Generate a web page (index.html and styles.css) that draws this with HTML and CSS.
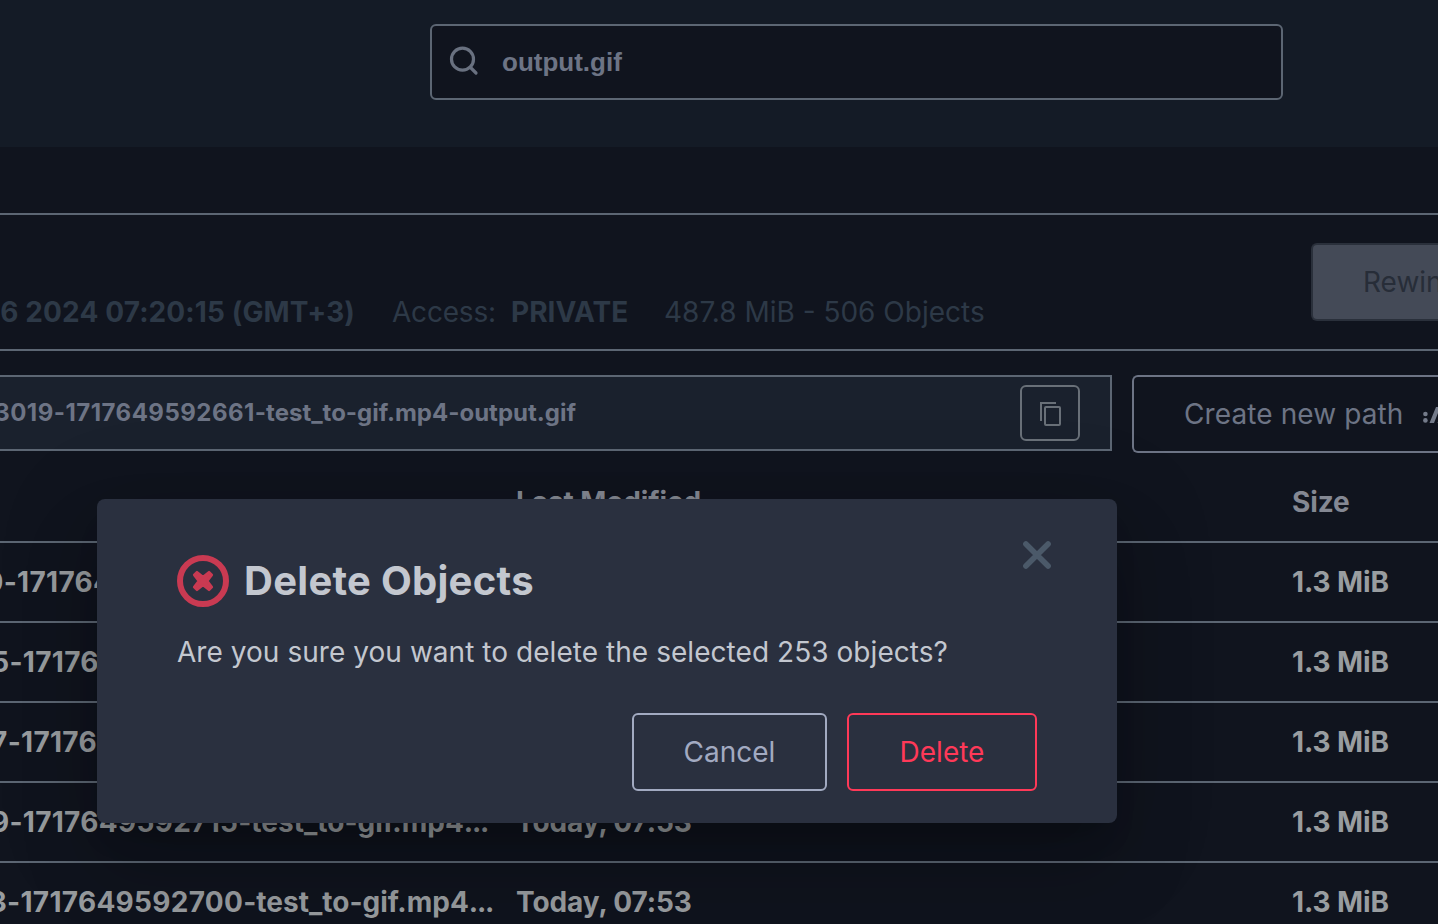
FILE: index.html
```html
<!DOCTYPE html>
<html lang="en">
<head>
<meta charset="utf-8">
<title>Delete Objects</title>
<link rel="stylesheet" href="styles.css">
</head>
<body>
<div class="app">
  <header class="topbar">
    <div class="search">
      <svg class="search-icon" width="30" height="30" viewBox="0 0 30 30" fill="none" stroke="#697180" stroke-width="3.2" stroke-linecap="round"><circle cx="13.5" cy="13.2" r="11"/><path d="M21.5 21.5 27 27"/></svg>
      <span class="search-text">output.gif</span>
    </div>
  </header>
  <section class="bucket">
    <div class="meta">
      <span class="created"><b>6 2024 07:20:15 (GMT+3)</b></span>
      <span class="access">Access:</span><b class="private">PRIVATE</b>
      <span class="usage">487.8 MiB - 506 Objects</span>
    </div>
    <button class="rewind">Rewind</button>
  </section>
  <section class="pathrow">
    <div class="path">
      <div class="path-text"><span><span class="num">3019-1717649592661</span>-test_to-gif.mp4-output.gif</span></div>
      <button class="copy"><svg width="22" height="26" viewBox="0 0 22 26" fill="none" stroke="#697078" stroke-width="2"><path d="M1 20V2h15"/><rect x="5" y="6" width="15" height="18" rx="1"/></svg></button>
    </div>
    <button class="newpath">Create new path <svg width="32" height="20" viewBox="0 0 32 20" fill="#747b8a"><circle cx="2.4" cy="8" r="2.3"/><circle cx="2.4" cy="14.4" r="2.3"/><path d="M6.5 17 13 1h4.4L11 17zM14.5 17 21 1h4.4L19 17z"/></svg></button>
  </section>
  <section class="table">
    <div class="row head"><div class="name"></div><div class="date">Last Modified</div><div class="size">Size</div></div>
    <div class="row"><div class="name n1"><span><span class="num">0-1717649592733</span>-test_to-gif.mp4<span class="dots">...</span></span></div><div class="date">Today, 07:53</div><div class="size">1.3 MiB</div></div>
    <div class="row"><div class="name n2"><span><span class="num">5-1717649592727</span>-test_to-gif.mp4<span class="dots">...</span></span></div><div class="date">Today, 07:53</div><div class="size">1.3 MiB</div></div>
    <div class="row"><div class="name n3"><span><span class="num">7-1717649592721</span>-test_to-gif.mp4<span class="dots">...</span></span></div><div class="date">Today, 07:53</div><div class="size">1.3 MiB</div></div>
    <div class="row"><div class="name n4"><span><span class="num">9-1717649592715</span>-test_to-gif.mp4<span class="dots">...</span></span></div><div class="date">Today, 07:53</div><div class="size">1.3 MiB</div></div>
    <div class="row"><div class="name n5"><span><span class="num">3-1717649592700</span>-test_to-gif.mp4<span class="dots">...</span></span></div><div class="date">Today, 07:53</div><div class="size">1.3 MiB</div></div>
  </section>
</div>
<div class="modal" role="dialog">
  <svg class="close" width="30" height="30" viewBox="0 0 30 30" stroke="#4b5969" stroke-width="5.6" stroke-linecap="round"><path d="M3.9 3.9 26.1 26.1M26.1 3.9 3.9 26.1"/></svg>
  <div class="title">
    <svg width="52" height="52" viewBox="0 0 52 52"><circle cx="26" cy="26" r="23" fill="none" stroke="#c93a52" stroke-width="6"/><path d="M20 17.2 26 22 32 17.2 34.8 20 30.2 26 34.8 32 32 34.8 26 30 20 34.8 17.2 32 21.8 26 17.2 20z" fill="#c93a52" stroke="#c93a52" stroke-width="2.6" stroke-linejoin="round"/></svg>
    <h1>Delete Objects</h1>
  </div>
  <p>Are you sure you want to delete the selected 253 objects?</p>
  <div class="actions"><button class="cancel">Cancel</button><button class="delete">Delete</button></div>
</div>
</body>
</html>
```
FILE: styles.css
```css
* { box-sizing: border-box; }
body { margin: 0; width: 1438px; height: 924px; overflow: hidden; background: #10141e; font-family: Inter, sans-serif; font-size: 28px; line-height: 34px; position: relative; }
button { font: inherit; background: none; margin: 0; white-space: nowrap; text-align: left; }
.app { width: 1438px; height: 924px; overflow: hidden; }
.topbar { height: 147px; background: #141b26; padding: 24px 0 0 430px; }
.search { width: 853px; height: 76px; border: 2px solid #5c6673; border-radius: 6px; background: #10141e; display: flex; align-items: center; padding-left: 17px; color: #6d7485; }
.search-icon { margin-right: 23px; margin-top: -2px; }
.search-text { font-family: "Liberation Sans", Arial, sans-serif; font-size: 26px; font-weight: 700; }
.bucket { height: 138px; margin-top: 66px; border-top: 2px solid #5c6673; border-bottom: 2px solid #5c6673; display: flex; justify-content: space-between; }
.meta { display: flex; padding-top: 80px; color: #2d3947; white-space: nowrap; font-weight: 400; }
.meta b { font-weight: 700; }
.created { width: 355px; display: flex; justify-content: flex-end; overflow: hidden; margin-right: 37px; letter-spacing: .12px; }
.access { width: 119px; letter-spacing: -.2px; }
.private { width: 153px; }
.rewind { width: 127px; height: 78px; margin-top: 28px; border: 2px solid #2a303b; border-right: 0; border-radius: 6px 0 0 6px; background: #444a57; color: #272d38; padding: 0 0 0 50px; overflow: hidden; font-weight: 400; }
.pathrow { display: flex; margin-top: 24px; gap: 20px; height: 78px; }
.path { width: 1112px; height: 76px; border: 2px solid #5c6673; border-left: 0; background: #1a212d; display: flex; align-items: center; }
.path-text { width: 576px; display: flex; justify-content: flex-end; overflow: hidden; white-space: nowrap; font-size: 24px; font-weight: 700; color: #6d7485; }
.path-text .num { letter-spacing: .48px; }
.copy { width: 60px; height: 56px; margin-left: 444px; border: 2px solid #697078; border-radius: 6px; display: flex; align-items: center; justify-content: center; padding: 2px 0 0 1px; }
.newpath { width: 306px; flex: none; height: 78px; border: 2px solid #6d7485; border-right: 0; border-radius: 6px 0 0 6px; color: #6d7485; padding: 0 0 0 50px; display: flex; align-items: center; overflow: hidden; font-weight: 400; letter-spacing: .1px; }
.newpath svg { flex: none; margin-left: 20px; margin-top: 4px; }
.row { height: 80px; border-bottom: 2px solid #5c6673; display: flex; align-items: center; color: #999da0; font-weight: 700; white-space: nowrap; }
.head { height: 90px; color: #848893; padding-top: 10px; }
.name { width: 494px; margin-right: 22px; display: flex; justify-content: flex-end; overflow: hidden; flex: none; }
.name .num { letter-spacing: .3px; }
.dots { letter-spacing: -1.3px; }
.n1 { padding-right: 6px; }
.n2 { padding-right: 2px; }
.n3 { padding-right: 8px; }
.n4 { padding-right: 6px; }
.n5 { padding-right: 1px; }
.date { width: 776px; flex: none; letter-spacing: -.1px; }
.size { letter-spacing: -.1px; }
.modal { position: absolute; left: 97px; top: 499px; width: 1020px; height: 324px; border-radius: 8px; background: #2a303f; padding: 56px 80px 0; box-shadow: 0 22px 30px -14px rgba(0,0,0,.2), 0 48px 76px 6px rgba(0,0,0,.14), 0 18px 92px 16px rgba(0,0,0,.12); color: #c3c7cf; }
.close { position: absolute; right: 65px; top: 41px; }
.title { display: flex; align-items: center; gap: 15px; height: 52px; }
h1 { margin: 0; font-size: 40px; line-height: 52px; font-weight: 700; white-space: nowrap; letter-spacing: .28px; }
p { margin: 27px 0 0; line-height: 36px; white-space: nowrap; letter-spacing: .05px; }
.actions { display: flex; justify-content: flex-end; gap: 20px; margin-top: 43px; }
.actions button { height: 78px; border: 2px solid; border-radius: 6px; padding: 0; text-align: center; font-weight: 400; }
.actions .cancel { width: 195px; color: #a2aac1; }
.actions .delete { width: 190px; color: #ff3958; }
```
